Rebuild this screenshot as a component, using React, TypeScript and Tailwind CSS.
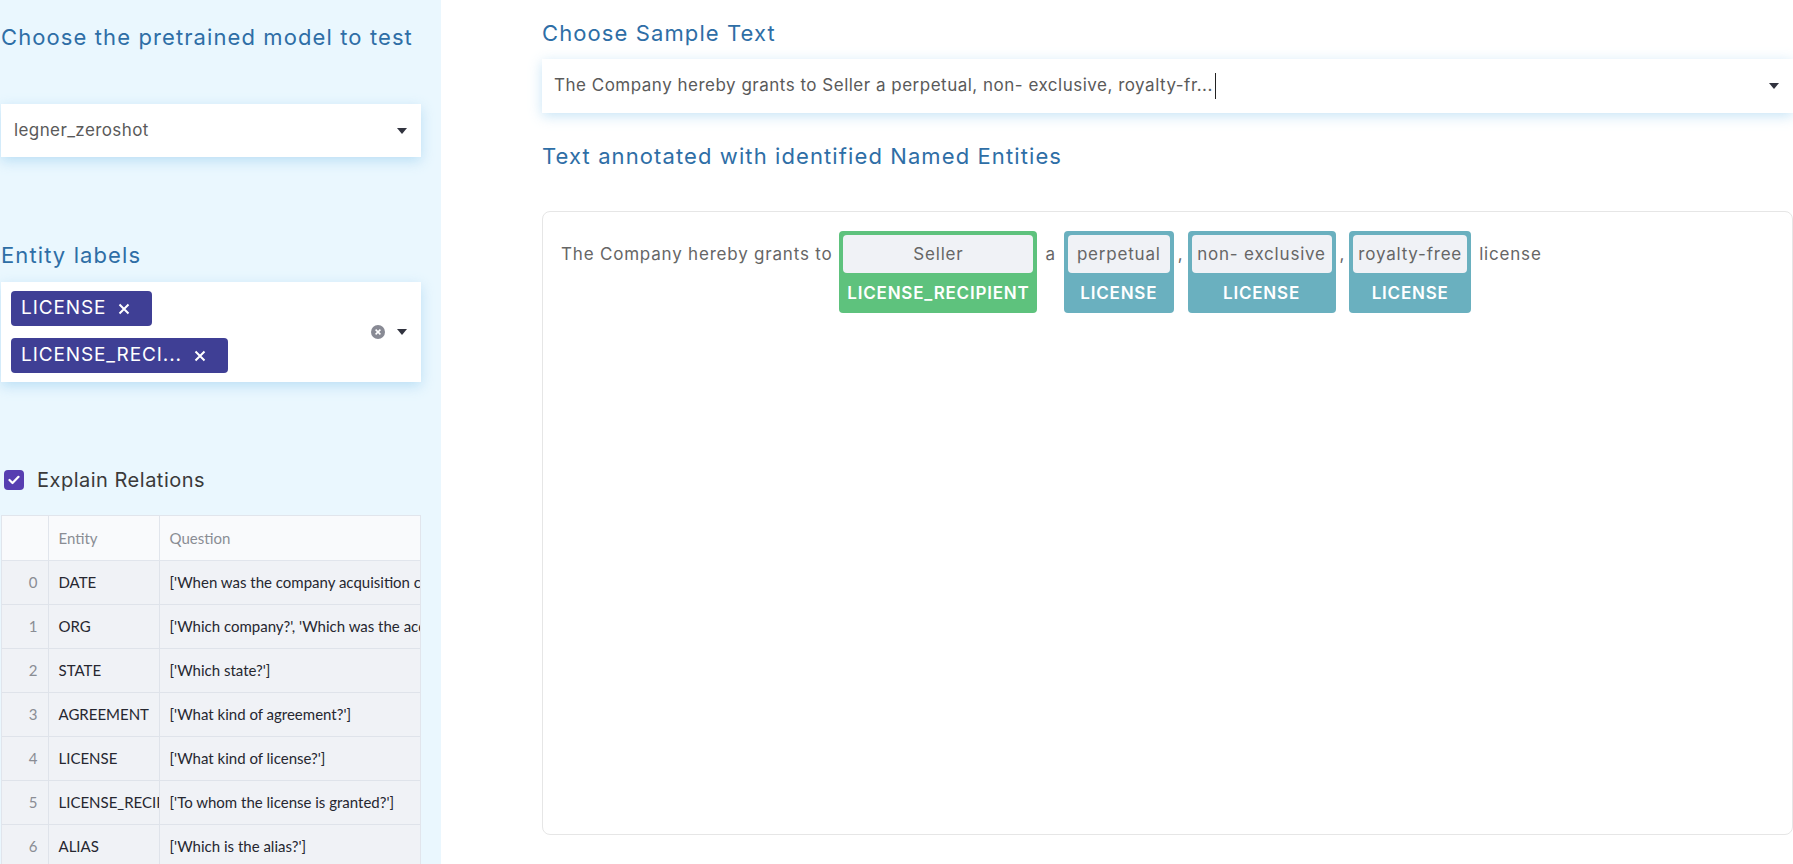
import React from 'react';

const headingCls = 'text-[22px] text-[#2e6ea6] font-[family-name:Inter,sans-serif] tracking-[1.1px]';

const Caret = () => (
  <svg width="10" height="6" viewBox="0 0 10 6" className="shrink-0">
    <path d="M0 0 H10 L5 6 Z" fill="#31333f" />
  </svg>
);

const EntityTag = ({ text }: { text: string }) => (
  <span className="inline-flex items-center h-[35px] pl-[10px] pr-[22px] gap-[12px] rounded-[4px] bg-[#3f3f95] text-white text-[19px] tracking-[0.9px]">
    {text}
    <svg width="12" height="12" viewBox="0 0 12 12">
      <path d="M1.5 1.5 L10.5 10.5 M10.5 1.5 L1.5 10.5" stroke="white" strokeWidth="2" />
    </svg>
  </span>
);

const questions: [string, string][] = [
  ['DATE', "['When was the company acquisition completed?']"],
  ['ORG', "['Which company?', 'Which was the acquired company?']"],
  ['STATE', "['Which state?']"],
  ['AGREEMENT', "['What kind of agreement?']"],
  ['LICENSE', "['What kind of license?']"],
  ['LICENSE_RECIPIENT', "['To whom the license is granted?']"],
  ['ALIAS', "['Which is the alias?']"],
];

const Entity = ({ text, label, color, width }: { text: string; label: string; color: string; width: string }) => (
  <span className={`inline-flex flex-col p-[4px] pb-0 rounded-[4px] ${color} ${width}`}>
    <span className="h-[38px] leading-[38px] rounded-[4px] bg-[#f0f2f6] text-center text-[#666] whitespace-nowrap">{text}</span>
    <span className="h-[40px] leading-[40px] text-center text-white font-semibold whitespace-nowrap">{label}</span>
  </span>
);

const Sidebar = () => (
  <div className="w-[441px] shrink-0 bg-[#eaf7fe] h-screen overflow-hidden pr-[20px] pl-[1px] font-[family-name:Inter,sans-serif]">
    <h2 className={`${headingCls} pt-[24px] leading-[26px]`}>Choose the pretrained model to test</h2>
    <div className="mt-[54px] h-[53px] bg-white flex items-center justify-between pl-[13px] pr-[14px] shadow-[0_4px_12px_rgba(130,195,235,0.45)]">
      <span className="text-[17px] tracking-[0.4px] text-[#5a5a5a]">legner_zeroshot</span>
      <Caret />
    </div>
    <h2 className={`${headingCls} mt-[85px] leading-[26px]`}>Entity labels</h2>
    <div className="mt-[14px] h-[100px] bg-white flex items-center justify-between pl-[10px] pr-[14px] shadow-[0_4px_12px_rgba(130,195,235,0.45)]">
      <div className="flex flex-col gap-[12px] items-start">
        <EntityTag text="LICENSE" />
        <EntityTag text="LICENSE_RECI..." />
      </div>
      <div className="flex items-center gap-[12px]">
        <svg width="14" height="14" viewBox="0 0 14 14">
          <circle cx="7" cy="7" r="7" fill="#888a94" />
          <path d="M4.6 4.6 L9.4 9.4 M9.4 4.6 L4.6 9.4" stroke="white" strokeWidth="1.5" />
        </svg>
        <Caret />
      </div>
    </div>
    <label className="mt-[83px] flex items-center gap-[13px]">
      <span className="w-[20px] h-[20px] ml-[3px] rounded-[4px] bg-[#573eb1] flex items-center justify-center">
        <svg width="12" height="10" viewBox="0 0 12 10">
          <path d="M1.5 5 L4.5 8 L10.5 1.8" stroke="white" strokeWidth="2.2" fill="none" strokeLinecap="round" strokeLinejoin="round" />
        </svg>
      </span>
      <span className="text-[20px] tracking-[0.5px] text-[#3a3a3a]">Explain Relations</span>
    </label>
    <div className="mt-[20px] w-[420px] overflow-hidden border border-[#e1e5ec] font-[family-name:Lato,sans-serif] text-[15px]">
      <table className="table-fixed border-collapse w-[560px]">
        <colgroup>
          <col className="w-[46px]" />
          <col className="w-[111px]" />
          <col />
        </colgroup>
        <thead>
          <tr className="h-[44px] bg-[#f9fafc] text-[#8a8d94]">
            <th className="border-r border-b border-[#e1e5ec]"></th>
            <th className="border-r border-b border-[#e1e5ec] text-left font-normal px-[10px]">Entity</th>
            <th className="border-b border-[#e1e5ec] text-left font-normal px-[10px]">Question</th>
          </tr>
        </thead>
        <tbody>
          {questions.map(([e, q], i) => (
            <tr key={i} className="h-[44px] bg-[#f0f2f6] text-[#262730]">
              <td className="border-r border-b border-[#dfe3ea] text-right pr-[10px] text-[#8a8d94]">{i}</td>
              <td className="border-r border-b border-[#dfe3ea] px-[10px] whitespace-nowrap overflow-hidden">{e}</td>
              <td className="border-b border-[#dfe3ea] px-[10px] whitespace-nowrap overflow-hidden">{q}</td>
            </tr>
          ))}
        </tbody>
      </table>
    </div>
  </div>
);

export default function App() {
  return (
    <div className="flex w-full h-screen overflow-hidden bg-white">
      <Sidebar />
      <div className="flex-1 pl-[101px] font-[family-name:Inter,sans-serif] min-w-0">
        <h2 className={`${headingCls} pt-[20px] leading-[26px]`}>Choose Sample Text</h2>
        <div className="mt-[13px] h-[54px] bg-white flex items-center justify-between pl-[12px] pr-[14px] shadow-[0_3px_12px_rgba(130,195,235,0.45)]">
          <span className="flex items-center text-[17px] tracking-[0.5px] text-[#5a5a5a]">
            The Company hereby grants to Seller a perpetual, non- exclusive, royalty-fr...
            <span className="inline-block w-px h-[26px] bg-[#222] ml-[2px]" />
          </span>
          <Caret />
        </div>
        <h2 className={`${headingCls} mt-[30px] leading-[26px]`}>Text annotated with identified Named Entities</h2>
        <div className="mt-[42px] h-[624px] border border-[#e6e6e6] rounded-[8px] px-[18px] pt-[19px] text-[17px] tracking-[0.8px] text-[#666]">
          <div className="flex flex-wrap items-start">
            <span className="leading-[38px] pt-[4px]">The Company hereby grants to</span>
            <span className="ml-[7px]"><Entity text="Seller" label="LICENSE_RECIPIENT" color="bg-[#5ec27d]" width="w-[198px]" /></span>
            <span className="leading-[38px] pt-[4px] mx-[8px]">a</span>
            <Entity text="perpetual" label="LICENSE" color="bg-[#6ab0bf]" width="w-[110px]" />
            <span className="leading-[38px] pt-[4px] mx-[4px]">,</span>
            <Entity text="non- exclusive" label="LICENSE" color="bg-[#6ab0bf]" width="w-[148px]" />
            <span className="leading-[38px] pt-[4px] mx-[4px]">,</span>
            <Entity text="royalty-free" label="LICENSE" color="bg-[#6ab0bf]" width="w-[122px]" />
            <span className="leading-[38px] pt-[4px] ml-[8px]">license</span>
          </div>
        </div>
      </div>
    </div>
  );
}
